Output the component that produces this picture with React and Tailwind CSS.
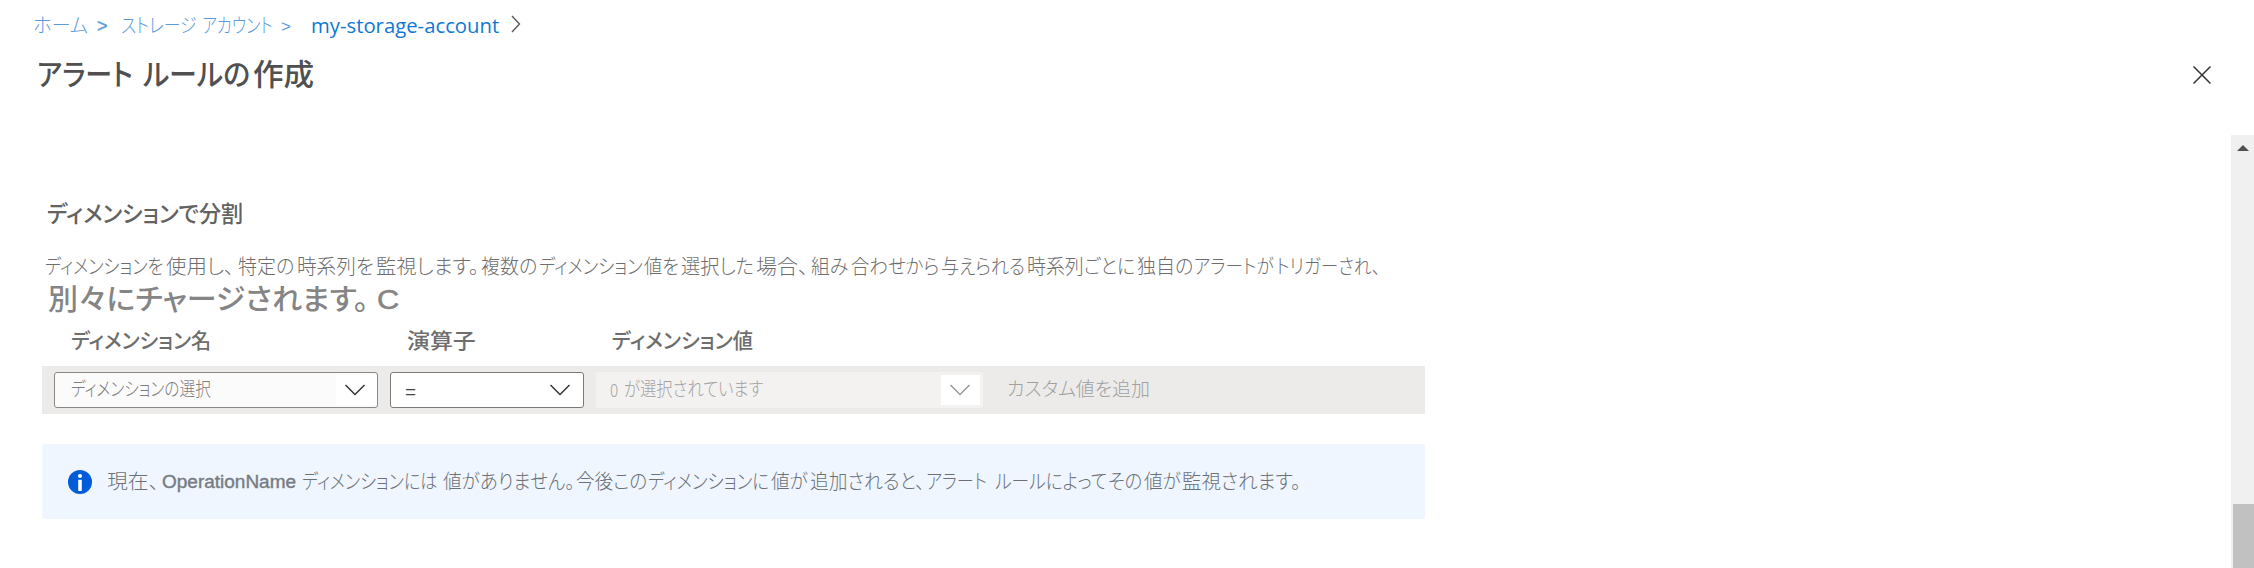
function Phrases({ items }) {
  return items.map(([text, slot, fit]) => (
    <span key={text + slot} className={`inline-block whitespace-nowrap ${slot}`}>
      <span className={`inline-block origin-left ${fit}`}>{text}</span>
    </span>
  ));
}

const description = [
  ["ディメンションを", "w-[121px]", "scale-x-[0.86]"],
  ["使用し、", "w-[72px]", "scale-x-[1.02]"],
  ["特定の", "w-[59px]", "scale-x-[0.95]"],
  ["時系列を", "w-[79px]", "scale-x-[0.98]"],
  ["監視します。", "w-[105px]", "scale-x-[1.015]"],
  ["複数の", "w-[58px]", "scale-x-[0.95]"],
  ["ディメンション", "w-[105px]", "scale-x-[0.87]"],
  ["値を", "w-[37px]", "scale-x-[0.91]"],
  ["選択した", "w-[75px]", "scale-x-[0.96]"],
  ["場合、", "w-[55px]", "scale-x-[1.05]"],
  ["組み", "w-[40px]", "scale-x-[0.94]"],
  ["合わせから", "w-[90px]", "scale-x-[0.92]"],
  ["与えられる", "w-[86px]", "scale-x-[0.9]"],
  ["時系列ごとに", "w-[110px]", "scale-x-[0.945]"],
  ["独自の", "w-[57px]", "scale-x-[0.95]"],
  ["アラートが", "w-[82px]", "scale-x-[0.88]"],
  ["トリガーされ、", "w-[110px]", "scale-x-[0.88]"],
];

const notice = [
  ["現在、", "w-[55px]", "scale-x-[1.04]"],
  ["OperationName", "w-[140px] text-[18px] text-[#777c84] [-webkit-text-stroke:0.4px_#777c84]", "scale-x-[1.055]"],
  ["ディメンションには", "w-[141px]", "scale-x-[0.855]"],
  ["値がありません。", "w-[133px]", "scale-x-[0.93]"],
  ["今後この", "w-[72px]", "scale-x-[0.93]"],
  ["ディメンションに", "w-[123px]", "scale-x-[0.875]"],
  ["値が", "w-[39px]", "scale-x-[0.93]"],
  ["追加されると、", "w-[116px]", "scale-x-[0.935]"],
  ["アラート", "w-[69px]", "scale-x-[0.86]"],
  ["ルールによって", "w-[113px]", "scale-x-[0.885]"],
  ["その", "w-[36px]", "scale-x-[0.92]"],
  ["値が", "w-[38px]", "scale-x-[0.93]"],
  ["監視されます。", "w-[126px]", "scale-x-[0.97]"],
];

function Chevron({ className }) {
  return (
    <svg viewBox="0 0 20 12" className={`h-3 w-5 shrink-0 ${className}`} fill="none" stroke="currentColor" strokeWidth="1.5">
      <path d="M0.5 1 L10 10.5 L19.5 1" />
    </svg>
  );
}

function Breadcrumb() {
  return (
    <nav className="flex h-[52px] items-center pl-[33px] text-[20px] leading-none text-[#5b9bdc]">
      <span className="w-[64px] font-light">
        <span className="inline-block origin-left scale-x-[0.96] whitespace-nowrap">ホーム</span>
      </span>
      <span className="w-[24px] text-[18px] [-webkit-text-stroke:0.4px_#5b9bdc]">&gt;</span>
      <Phrases
        items={[
          ["ストレージ", "w-[81px] font-light", "scale-x-[0.84]"],
          ["アカウント", "w-[79px] font-light", "scale-x-[0.8]"],
        ]}
      />
      <span className="w-[30px] text-[17px]">&gt;</span>
      <span className="w-[200px] whitespace-nowrap font-['Open_Sans',sans-serif] text-[20px] text-[#0f78d4]">
        <span className="inline-block origin-left scale-x-[1.015]">my-storage-account</span>
      </span>
      <svg viewBox="0 0 10 18" className="mb-1 h-[18px] w-[10px]" fill="none" stroke="#5a5a5a" strokeWidth="1.4">
        <path d="M1 1 L8.5 9 L1 17" />
      </svg>
    </nav>
  );
}

export default function App() {
  return (
    <div className="flex h-[568px] w-full flex-col overflow-hidden bg-white font-['Liberation_Sans','Noto_Sans_CJK_JP',sans-serif] [font-feature-settings:'palt']">
      <Breadcrumb />
      <header className="flex h-[83px] items-start justify-between pl-[37px] pr-[43px]">
        <h1 className="flex h-[46px] items-center text-[30px] font-medium leading-none text-[#505050]">
          <Phrases
            items={[
              ["アラート", "w-[106px]", "scale-x-[0.9]"],
              ["ルールの", "w-[110px]", "scale-x-[0.935]"],
              ["作成", "w-[62px]", "scale-x-[1.02]"],
            ]}
          />
        </h1>
        <svg viewBox="0 0 18 18" className="mt-[14px] h-[18px] w-[18px]" fill="none" stroke="#333" strokeWidth="1.5">
          <path d="M0.5 0.5 L17.5 17.5 M17.5 0.5 L0.5 17.5" />
        </svg>
      </header>

      <div className="flex flex-1">
        <main className="flex w-[1425px] flex-col pl-[42px]">
          <h2 className="mt-[63px] flex h-[32px] items-center pl-[5px] text-[23px] font-medium leading-none text-[#626262]">
            <Phrases items={[["ディメンションで分割", "w-[200px]", "scale-x-[0.96]"]]} />
          </h2>

          <p className="mt-[22px] flex h-[30px] items-center pl-[3px] text-[20px] font-light leading-none text-[#6e6e6e]">
            <Phrases items={description} />
          </p>
          <p className="flex h-[36px] items-center pl-[6px] text-[29px] font-medium leading-none text-[#858585]">
            <Phrases
              items={[
                ["別々にチャージされます。", "w-[329px]", "scale-x-[1.035]"],
                ["C", "w-[24px] text-[28px] [-webkit-text-stroke:0.5px_#858585]", "scale-x-[1.1]"],
              ]}
            />
          </p>

          <div className="flex h-[48px] items-center pb-[3px] pl-[29px] text-[21px] font-medium leading-none text-[#6e6e6e]">
            <Phrases
              items={[
                ["ディメンション名", "w-[336px]", "scale-x-[0.96]"],
                ["演算子", "w-[205px]", "scale-x-[1.09]"],
                ["ディメンション値", "w-[150px]", "scale-x-[0.965]"],
              ]}
            />
          </div>

          <div className="flex h-[48px] items-center gap-3 bg-[#ecebe9] pl-3 text-[19px] font-light leading-none">
            <div className="flex h-[36px] w-[324px] items-center justify-between rounded-[3px] border border-[#8a8886] bg-[#fbfbfb] pl-4 text-[#7e7e7e]">
              <Phrases items={[["ディメンションの選択", "w-[150px] pb-[2px]", "scale-x-[0.825]"]]} />
              <div className="flex h-[30px] w-[41px] items-center bg-white pl-[9px]">
                <Chevron className="text-[#333]" />
              </div>
            </div>
            <div className="flex h-[36px] w-[194px] items-center justify-between rounded-[3px] border border-[#7d7b79] bg-white pl-[14px] pr-[13px]">
              <span className="pt-[2px] font-normal text-[#444]">=</span>
              <Chevron className="text-[#333]" />
            </div>
            <div className="flex h-[36px] w-[387px] items-center rounded-[3px] bg-[#f3f2f1] pl-[14px] pr-[3px] text-[#a3a3a3]">
              <Phrases
                items={[
                  ["0", "w-[14px] pb-[2px] text-[18px] font-['Noto_Sans_CJK_JP',sans-serif]", "scale-x-[0.85]"],
                  ["が選択されています", "w-[317px] pb-[2px]", "scale-x-[0.86]"],
                ]}
              />
              <div className="flex h-[30px] w-[39px] items-center bg-white pl-[9px]">
                <Chevron className="text-[#9a9a9a]" />
              </div>
            </div>
            <span className="pb-[2px] pl-3 text-[#a0a0a0]">
              <Phrases items={[["カスタム値を追加", "w-[150px]", "scale-x-[0.995]"]]} />
            </span>
          </div>

          <div className="mt-[30px] flex h-[75px] items-center rounded-[3px] bg-[#eff6ff] pl-[26px] text-[20px] font-light leading-none text-[#6c7178]">
            <svg viewBox="0 0 24 24" className="mr-[15px] h-6 w-6 shrink-0">
              <circle cx="12" cy="12" r="12" fill="#015cda" />
              <circle cx="12" cy="6" r="2.1" fill="#fff" />
              <rect x="10.2" y="9.8" width="3.6" height="11.2" fill="#fff" />
            </svg>
            <Phrases items={notice} />
          </div>
        </main>

        <aside className="ml-auto flex w-[23px] flex-col items-end bg-[#f0f0f0]">
          <svg viewBox="0 0 12 6" className="mr-[5px] mt-[10px] h-[6px] w-3" fill="#505050">
            <path d="M6 0 L12 6 H0 Z" />
          </svg>
          <div className="mt-auto h-[64px] w-[21px] bg-[#c1c1c1]" />
        </aside>
      </div>
    </div>
  );
}
